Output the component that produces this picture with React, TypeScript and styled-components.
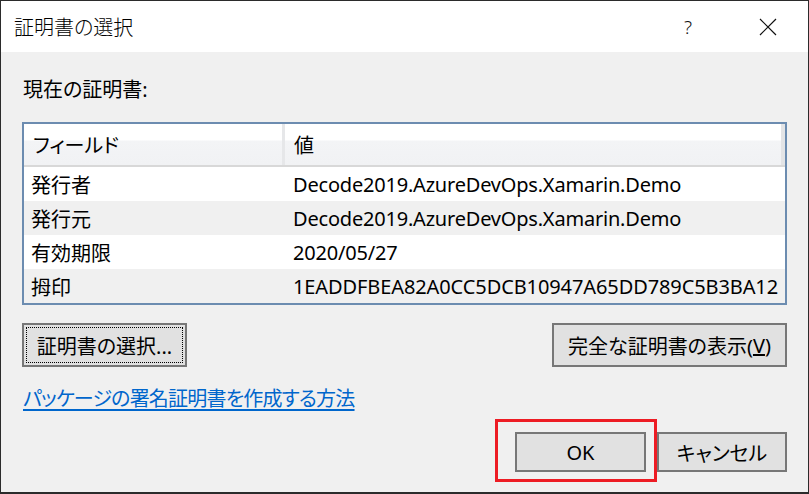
import React from "react";
import styled, { createGlobalStyle } from "styled-components";

const Global = createGlobalStyle`
  html, body { margin: 0; padding: 0; background: #f0f0f0; }
  body {
    font-family: "Noto Sans", "Noto Sans CJK JP", sans-serif;
    font-feature-settings: "palt";
    color: #000;
  }
`;

const Window = styled.div`
  box-sizing: border-box;
  width: 809px;
  height: 494px;
  border: 1px solid #2b2b2b;
  border-bottom-width: 2px;
  display: flex;
  flex-direction: column;
  background: #f0f0f0;
`;

const TitleBar = styled.div`
  height: 51px;
  flex: none;
  background: #fff;
  display: flex;
  align-items: center;
  padding-left: 13px;
`;

const Title = styled.div`
  flex: 1;
  font-size: 20px;
  line-height: 24px;
  font-family: "Noto Sans CJK JP", sans-serif;
  font-weight: 300;
`;

const TitleButton = styled.div`
  width: 80px;
  height: 51px;
  display: flex;
  align-items: center;
  justify-content: center;
  font-size: 19px;
  font-weight: 300;
  color: #111;
`;

const Body = styled.div`
  flex: 1;
  display: flex;
  flex-direction: column;
  padding: 0 21px;
`;

const Label = styled.div`
  margin-top: 24px;
  font-size: 20px;
  line-height: 28px;
  padding-left: 1px;
`;

const Table = styled.div`
  margin-top: 18px;
  border: 2px solid #6c8cb0;
  background: #fff;
  display: flex;
  flex-direction: column;
`;

const HeaderRow = styled.div`
  height: 43px;
  display: grid;
  grid-template-columns: 261px 1fr 4px;
  background: linear-gradient(#ffffff 0, #ffffff 16px, #f3f4f6 17px, #f1f2f4 40px);
  border-bottom: 2px solid #d8d8d8;
  box-sizing: border-box;
`;

const HeaderCell = styled.div<{ $first?: boolean }>`
  display: flex;
  align-items: center;
  padding-left: 9px;
  font-size: 20px;
  border-right: ${(p) => (p.$first ? "3px solid #e6e7e9" : "none")};
`;

const HeaderEnd = styled.div`
  background: #e3e4e6;
`;

const Row = styled.div<{ $alt?: boolean }>`
  height: 34px;
  display: grid;
  grid-template-columns: 262px 1fr;
  align-items: center;
  background: ${(p) => (p.$alt ? "#f0f0f0" : "#fff")};
  font-size: 20px;
`;

const Cell = styled.div<{ $first?: boolean; $ls?: number }>`
  padding-left: 7px;
  white-space: nowrap;
  overflow: hidden;
  letter-spacing: ${(p) => (p.$ls ?? 0)}px;
`;

const ButtonRow = styled.div`
  margin-top: 18px;
  display: flex;
  justify-content: space-between;
`;

const Button = styled.button<{ $w: number; $h: number; $focus?: boolean }>`
  box-sizing: border-box;
  width: ${(p) => p.$w}px;
  height: ${(p) => p.$h}px;
  background: #e1e1e1;
  border: 2px solid #777777;
  font-family: "Noto Sans", "Noto Sans CJK JP", sans-serif;
  font-feature-settings: "palt";
  font-size: 20px;
  color: #000;
  padding: 0;
  display: flex;
  align-items: center;
  justify-content: center;
  outline: ${(p) => (p.$focus ? "1px dotted #000" : "none")};
  outline-offset: -5px;
`;

const Link = styled.a`
  margin-top: 20px;
  align-self: flex-start;
  font-size: 20px;
  line-height: 24px;
  color: #0066cc;
  text-decoration: underline;
  text-underline-offset: 3px;
  letter-spacing: -0.8px;
  padding-left: 1px;
`;

const Footer = styled.div`
  margin-top: 8px;
  display: flex;
  justify-content: flex-end;
  align-items: flex-start;
`;

const Highlight = styled.div`
  border: 3px solid #ed1c24;
  padding: 10px 8px 7px 17px;
`;

const CancelWrap = styled.div`
  margin-top: 13px;
`;

export default function App() {
  return (
    <>
      <Global />
      <Window>
        <TitleBar>
          <Title>証明書の選択</Title>
          <TitleButton>?</TitleButton>
          <TitleButton>
            <svg width="18" height="18" viewBox="0 0 18 18">
              <path d="M1 1 L17 17 M17 1 L1 17" stroke="#111" strokeWidth="1.2" fill="none" />
            </svg>
          </TitleButton>
        </TitleBar>
        <Body>
          <Label>現在の証明書:</Label>
          <Table>
            <HeaderRow>
              <HeaderCell $first>フィールド</HeaderCell>
              <HeaderCell>値</HeaderCell>
              <HeaderEnd />
            </HeaderRow>
            <Row>
              <Cell $first>発行者</Cell>
              <Cell $ls={-0.2}>Decode2019.AzureDevOps.Xamarin.Demo</Cell>
            </Row>
            <Row $alt>
              <Cell $first>発行元</Cell>
              <Cell $ls={-0.2}>Decode2019.AzureDevOps.Xamarin.Demo</Cell>
            </Row>
            <Row>
              <Cell $first>有効期限</Cell>
              <Cell $ls={-0.2}>2020/05/27</Cell>
            </Row>
            <Row $alt>
              <Cell $first>拇印</Cell>
              <Cell $ls={-0.1}>1EADDFBEA82A0CC5DCB10947A65DD789C5B3BA12</Cell>
            </Row>
          </Table>
          <ButtonRow>
            <Button $w={165} $h={44} $focus>証明書の選択...</Button>
            <Button $w={235} $h={44}>
              完全な証明書の表示(<u>V</u>)
            </Button>
          </ButtonRow>
          <Link href="#">パッケージの署名証明書を作成する方法</Link>
          <Footer>
            <Highlight>
              <Button $w={131} $h={40}>OK</Button>
            </Highlight>
            <CancelWrap>
              <Button $w={130} $h={40}>キャンセル</Button>
            </CancelWrap>
          </Footer>
        </Body>
      </Window>
    </>
  );
}
